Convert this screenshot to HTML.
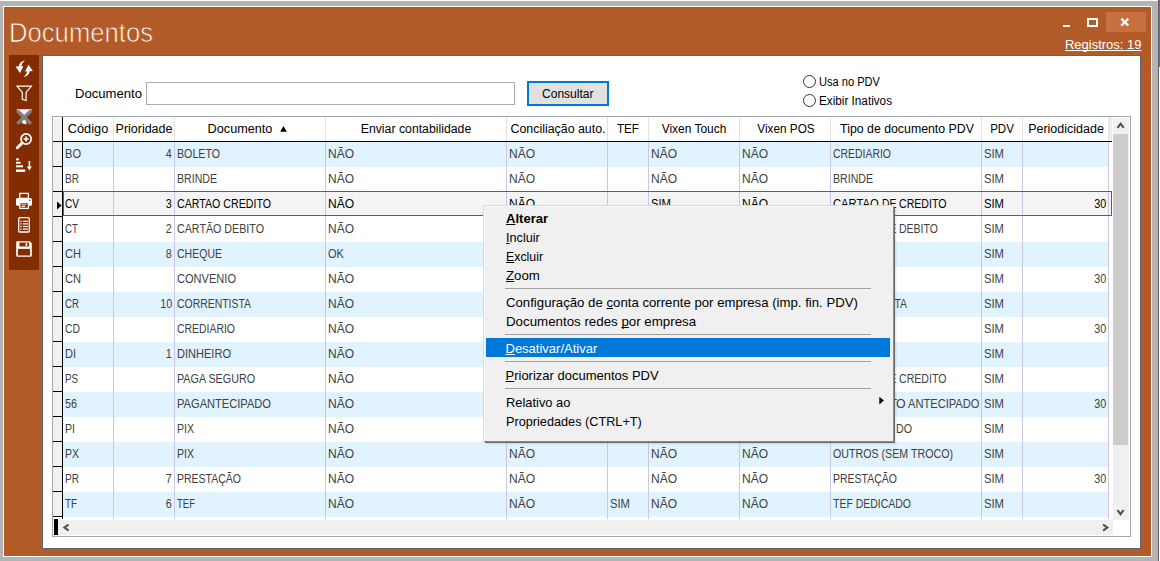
<!DOCTYPE html><html><head><meta charset="utf-8"><title>Documentos</title><style>
html,body{margin:0;padding:0}
body{width:1160px;height:561px;overflow:hidden;position:relative;background:#fff;font-family:"Liberation Sans",sans-serif}
.t{display:block}
u{text-decoration:underline;text-underline-offset:1px;text-decoration-thickness:1px;text-decoration-skip-ink:none}
</style></head><body>
<div style="position:absolute;left:0px;top:0px;width:1160px;height:561px;background:#fff;"></div>
<div style="position:absolute;left:0px;top:1px;width:1158px;height:560px;background:#b4b4b4;"></div>
<div style="position:absolute;left:3px;top:6px;width:1149px;height:551px;background:#fff;"></div>
<div style="position:absolute;left:4px;top:7px;width:1147px;height:549px;background:#b35b28;"></div>
<div style="position:absolute;left:1158px;top:0px;width:1px;height:561px;background:#5c6268;"></div>
<div style="position:absolute;left:1159px;top:0px;width:1px;height:67px;background:#b35b28;"></div>
<div style="position:absolute;left:1159px;top:67px;width:1px;height:494px;background:#fff;"></div>
<span class="t" style="position:absolute;top:16.00px;line-height:33px;font-size:27.5px;color:#fff;font-weight:normal;white-space:nowrap;-webkit-text-stroke:0.75px #b35b28;left:8.6px;transform-origin:0 50%;transform:scaleX(0.9327);">Documentos</span>
<div style="position:absolute;left:1106px;top:12px;width:40px;height:20px;background:#c87040;"></div>
<div style="position:absolute;left:1063px;top:25px;width:7px;height:2px;background:#fff;"></div>
<div style="position:absolute;left:1087px;top:18px;width:7px;height:5px;border:2px solid #fff;border-top-width:2px"></div>
<svg style="position:absolute;left:1119px;top:16px" width="12" height="12" viewBox="0 0 12 12"><path d="M2.3 2.6 L9.3 9.6 M9.3 2.6 L2.3 9.6" stroke="#fff" stroke-width="2.2" fill="none"/></svg>
<span class="t" style="position:absolute;top:36.00px;line-height:17px;font-size:13px;color:#fff;font-weight:normal;white-space:nowrap;text-decoration:underline;text-underline-offset:1px;text-decoration-skip-ink:none;text-decoration-thickness:1px;right:18.5px;transform-origin:100% 50%;">Registros: 19</span>
<div style="position:absolute;left:9px;top:55px;width:30px;height:215px;background:#822c00;"></div>
<!--ICONS-->
<svg style="position:absolute;left:9px;top:55px" width="30" height="215" viewBox="9 55 30 215">
<g fill="#fff" stroke="none">
<g id="ra"><path d="M15.6 66.6 L23.4 66.2 L19.9 72.9 Z"/><path d="M18.9 67.2 C18.6 63.8 21.2 61.2 25 60.6 C22.8 62.4 21.3 64.4 21.4 67.2 Z"/></g>
<g transform="rotate(180 24.2 68.8)"><path d="M15.6 66.6 L23.4 66.2 L19.9 72.9 Z"/><path d="M18.9 67.2 C18.6 63.8 21.2 61.2 25 60.6 C22.8 62.4 21.3 64.4 21.4 67.2 Z"/></g>
</g>
<path d="M17 86.2 L31.4 86.2 L26.1 92.4 L26.1 100.5 L22.3 99.3 L22.3 92.4 Z" fill="none" stroke="#fff" stroke-width="1.2" stroke-linejoin="miter"/>
<path d="M16.3 109.3 L32.1 109.3 L26.3 116 L26.3 124.6 L22.1 123.2 L22.1 116 Z" fill="#fff"/>
<path d="M17.3 110.8 L31 123.8 M31 110.8 L17.3 123.8" stroke="#808080" stroke-width="3.4" fill="none"/>
<circle cx="26.1" cy="139" r="5.1" fill="none" stroke="#fff" stroke-width="1.7"/>
<path d="M22 143.1 L17.3 147.7" stroke="#fff" stroke-width="2.9" stroke-linecap="round"/>
<path d="M23.5 139 L28.7 139 M26.1 136.4 L26.1 141.6" stroke="#fff" stroke-width="1.7"/>
<g fill="#fff"><rect x="16" y="158.4" width="3" height="1.9"/><rect x="16" y="161.8" width="4.7" height="1.9"/><rect x="16" y="165.3" width="7" height="2"/><rect x="16" y="169.5" width="9.2" height="2.4"/>
<rect x="28.6" y="161" width="1.6" height="6.5"/><path d="M26.9 166.6 L31.9 166.6 L29.4 170.4 Z"/></g>
<rect x="19.8" y="193.4" width="8.6" height="5" fill="none" stroke="#fff" stroke-width="1.3"/>
<rect x="16" y="198" width="16" height="7.8" rx="1.6" fill="#fff"/>
<rect x="19.8" y="202.6" width="8.6" height="5.8" fill="#822c00" stroke="#fff" stroke-width="1.3"/>
<rect x="21.5" y="204.4" width="4.5" height="0.9" fill="#fff"/><rect x="21.5" y="206" width="3.5" height="0.9" fill="#fff"/>
<rect x="29.2" y="199.6" width="1.3" height="1.3" fill="#822c00"/>
<rect x="18.7" y="217.7" width="10.6" height="14.3" rx="1.2" fill="none" stroke="#fff" stroke-width="1.3"/>
<g fill="#fff"><rect x="22.9" y="220.7" width="5" height="1.2"/><rect x="22.9" y="223.3" width="5" height="1.2"/><rect x="22.9" y="225.9" width="5" height="1.2"/><rect x="22.9" y="228.5" width="5" height="1.2"/>
<rect x="20.3" y="220.7" width="1.5" height="1.2"/><rect x="20.3" y="223.3" width="1.5" height="1.2"/><rect x="20.3" y="225.9" width="1.5" height="1.2"/><rect x="20.3" y="228.5" width="1.5" height="1.2"/></g>
<path d="M17.6 241.2 L29.6 241.2 L31.8 243.2 L31.8 255.4 Q31.8 256.8 30.4 256.8 L17.6 256.8 Q16.2 256.8 16.2 255.4 L16.2 242.6 Q16.2 241.2 17.6 241.2 Z" fill="#fff"/>
<rect x="19.4" y="242.5" width="9.6" height="4" fill="#822c00"/><rect x="25.6" y="243" width="1.6" height="3" fill="#fff"/>
<rect x="17.9" y="248.9" width="12.2" height="6.6" fill="#822c00"/>
</svg>

<div style="position:absolute;left:42px;top:55px;width:1099px;height:494px;background:#5d646b;"></div>
<div style="position:absolute;left:43px;top:56px;width:1097px;height:492px;background:#fff;"></div>
<span class="t" style="position:absolute;top:85.00px;line-height:17px;font-size:13px;color:#000;font-weight:normal;white-space:nowrap;left:74.6px;transform-origin:0 50%;transform:scaleX(1.0078);">Documento</span>
<div style="position:absolute;left:146px;top:82px;width:367px;height:21px;border:1px solid #abadb3;background:#fff"></div>
<div style="position:absolute;left:527px;top:81px;width:78px;height:21px;border:2px solid #0078d7;background:#e1e1e1"></div>
<span class="t" style="position:absolute;top:86.00px;line-height:16px;font-size:12px;color:#000;font-weight:normal;white-space:nowrap;left:267.79999999999995px;width:600px;text-align:center;transform-origin:50% 50%;">Consultar</span>
<div style="position:absolute;left:803px;top:75px;width:11px;height:11px;border:1px solid #333;border-radius:50%;background:#fff"></div>
<div style="position:absolute;left:803px;top:94px;width:11px;height:11px;border:1px solid #333;border-radius:50%;background:#fff"></div>
<span class="t" style="position:absolute;top:74.00px;line-height:16px;font-size:12px;color:#000;font-weight:normal;white-space:nowrap;left:818.6px;transform-origin:0 50%;transform:scaleX(0.9238);">Usa no PDV</span>
<span class="t" style="position:absolute;top:93.00px;line-height:16px;font-size:12px;color:#000;font-weight:normal;white-space:nowrap;left:818.6px;transform-origin:0 50%;transform:scaleX(0.9772);">Exibir Inativos</span>
<div style="position:absolute;left:52px;top:116px;width:1079px;height:421px;background:#a3a8b0;"></div>
<div style="position:absolute;left:53px;top:117px;width:1077px;height:419px;background:#fff;"></div>
<div style="position:absolute;left:53px;top:117px;width:9px;height:400px;background:#f0f0f0;"></div>
<div style="position:absolute;left:62px;top:117px;width:1px;height:402px;background:#000;"></div>
<div style="position:absolute;left:53px;top:117px;width:9px;height:1px;background:#fff;"></div>
<div style="position:absolute;left:53px;top:117px;width:1px;height:24px;background:#fff;"></div>
<div style="position:absolute;left:53px;top:140px;width:9px;height:1px;background:#f8f8f8;"></div>
<div style="position:absolute;left:113px;top:117px;width:1px;height:24px;background:#e2e2e2;"></div>
<div style="position:absolute;left:174px;top:117px;width:1px;height:24px;background:#e2e2e2;"></div>
<div style="position:absolute;left:325px;top:117px;width:1px;height:24px;background:#e2e2e2;"></div>
<div style="position:absolute;left:506px;top:117px;width:1px;height:24px;background:#e2e2e2;"></div>
<div style="position:absolute;left:607px;top:117px;width:1px;height:24px;background:#e2e2e2;"></div>
<div style="position:absolute;left:648px;top:117px;width:1px;height:24px;background:#e2e2e2;"></div>
<div style="position:absolute;left:739px;top:117px;width:1px;height:24px;background:#e2e2e2;"></div>
<div style="position:absolute;left:830px;top:117px;width:1px;height:24px;background:#e2e2e2;"></div>
<div style="position:absolute;left:981px;top:117px;width:1px;height:24px;background:#e2e2e2;"></div>
<div style="position:absolute;left:1022px;top:117px;width:1px;height:24px;background:#e2e2e2;"></div>
<div style="position:absolute;left:1108px;top:117px;width:1px;height:24px;background:#e2e2e2;"></div>
<div style="position:absolute;left:1109px;top:117px;width:3px;height:24px;background:#ececec;"></div>
<div style="position:absolute;left:53px;top:141px;width:1059px;height:1px;background:#000;"></div>
<span class="t" style="position:absolute;top:121.00px;line-height:16px;font-size:12px;color:#000;font-weight:normal;white-space:nowrap;left:-212.25px;width:600px;text-align:center;transform-origin:50% 50%;transform:scaleX(1.0649);">Código</span>
<span class="t" style="position:absolute;top:121.00px;line-height:16px;font-size:12px;color:#000;font-weight:normal;white-space:nowrap;left:-156.3px;width:600px;text-align:center;transform-origin:50% 50%;transform:scaleX(1.0383);">Prioridade</span>
<span class="t" style="position:absolute;top:121.00px;line-height:16px;font-size:12px;color:#000;font-weight:normal;white-space:nowrap;left:-59.900000000000006px;width:600px;text-align:center;transform-origin:50% 50%;transform:scaleX(1.0558);">Documento</span>
<span class="t" style="position:absolute;top:121.00px;line-height:16px;font-size:12px;color:#000;font-weight:normal;white-space:nowrap;left:116.10000000000002px;width:600px;text-align:center;transform-origin:50% 50%;transform:scaleX(1.0233);">Enviar contabilidade</span>
<span class="t" style="position:absolute;top:121.00px;line-height:16px;font-size:12px;color:#000;font-weight:normal;white-space:nowrap;left:257.54999999999995px;width:600px;text-align:center;transform-origin:50% 50%;transform:scaleX(1.0330);">Conciliação auto.</span>
<span class="t" style="position:absolute;top:121.00px;line-height:16px;font-size:12px;color:#000;font-weight:normal;white-space:nowrap;left:328.25px;width:600px;text-align:center;transform-origin:50% 50%;transform:scaleX(0.9660);">TEF</span>
<span class="t" style="position:absolute;top:121.00px;line-height:16px;font-size:12px;color:#000;font-weight:normal;white-space:nowrap;left:394.0999999999999px;width:600px;text-align:center;transform-origin:50% 50%;transform:scaleX(0.9946);">Vixen Touch</span>
<span class="t" style="position:absolute;top:121.00px;line-height:16px;font-size:12px;color:#000;font-weight:normal;white-space:nowrap;left:485.6500000000001px;width:600px;text-align:center;transform-origin:50% 50%;transform:scaleX(0.9797);">Vixen POS</span>
<span class="t" style="position:absolute;top:121.00px;line-height:16px;font-size:12px;color:#000;font-weight:normal;white-space:nowrap;left:606.5px;width:600px;text-align:center;transform-origin:50% 50%;transform:scaleX(1.0269);">Tipo de documento PDV</span>
<span class="t" style="position:absolute;top:121.00px;line-height:16px;font-size:12px;color:#000;font-weight:normal;white-space:nowrap;left:702.15px;width:600px;text-align:center;transform-origin:50% 50%;transform:scaleX(0.9600);">PDV</span>
<span class="t" style="position:absolute;top:121.00px;line-height:16px;font-size:12px;color:#000;font-weight:normal;white-space:nowrap;left:765.6500000000001px;width:600px;text-align:center;transform-origin:50% 50%;transform:scaleX(1.0410);">Periodicidade</span>
<svg style="position:absolute;left:279.5px;top:125px" width="8" height="8" viewBox="0 0 8 8"><path d="M0.2 6.8 L3.5 1 L6.8 6.8 Z" fill="#000"/></svg>
<div style="position:absolute;left:63px;top:191px;width:1049px;height:25px;background:#f4f4f4;"></div>
<div style="position:absolute;left:63px;top:142px;width:1046px;height:25px;background:#e0f3fe;"></div>
<div style="position:absolute;left:53px;top:166px;width:9px;height:1px;background:#000;"></div>
<span class="t" style="position:absolute;top:146.00px;line-height:16px;font-size:12px;color:#404040;font-weight:normal;white-space:nowrap;left:65px;transform-origin:0 50%;transform:scaleX(0.9225);">BO</span>
<span class="t" style="position:absolute;top:146.00px;line-height:16px;font-size:12px;color:#404040;font-weight:normal;white-space:nowrap;right:988px;transform-origin:100% 50%;transform:scaleX(0.8972);">4</span>
<span class="t" style="position:absolute;top:146.00px;line-height:16px;font-size:12px;color:#404040;font-weight:normal;white-space:nowrap;left:177px;transform-origin:0 50%;transform:scaleX(0.8872);">BOLETO</span>
<span class="t" style="position:absolute;top:146.00px;line-height:16px;font-size:12px;color:#404040;font-weight:normal;white-space:nowrap;left:328px;transform-origin:0 50%;">NÃO</span>
<span class="t" style="position:absolute;top:146.00px;line-height:16px;font-size:12px;color:#404040;font-weight:normal;white-space:nowrap;left:509px;transform-origin:0 50%;">NÃO</span>
<span class="t" style="position:absolute;top:146.00px;line-height:16px;font-size:12px;color:#404040;font-weight:normal;white-space:nowrap;left:651px;transform-origin:0 50%;">NÃO</span>
<span class="t" style="position:absolute;top:146.00px;line-height:16px;font-size:12px;color:#404040;font-weight:normal;white-space:nowrap;left:742px;transform-origin:0 50%;">NÃO</span>
<span class="t" style="position:absolute;top:146.00px;line-height:16px;font-size:12px;color:#404040;font-weight:normal;white-space:nowrap;left:833px;transform-origin:0 50%;transform:scaleX(0.8697);">CREDIARIO</span>
<span class="t" style="position:absolute;top:146.00px;line-height:16px;font-size:12px;color:#404040;font-weight:normal;white-space:nowrap;left:984px;transform-origin:0 50%;transform:scaleX(0.9370);">SIM</span>
<div style="position:absolute;left:53px;top:191px;width:9px;height:1px;background:#000;"></div>
<span class="t" style="position:absolute;top:171.00px;line-height:16px;font-size:12px;color:#404040;font-weight:normal;white-space:nowrap;left:65px;transform-origin:0 50%;transform:scaleX(0.8397);">BR</span>
<span class="t" style="position:absolute;top:171.00px;line-height:16px;font-size:12px;color:#404040;font-weight:normal;white-space:nowrap;left:177px;transform-origin:0 50%;transform:scaleX(0.8822);">BRINDE</span>
<span class="t" style="position:absolute;top:171.00px;line-height:16px;font-size:12px;color:#404040;font-weight:normal;white-space:nowrap;left:328px;transform-origin:0 50%;">NÃO</span>
<span class="t" style="position:absolute;top:171.00px;line-height:16px;font-size:12px;color:#404040;font-weight:normal;white-space:nowrap;left:509px;transform-origin:0 50%;">NÃO</span>
<span class="t" style="position:absolute;top:171.00px;line-height:16px;font-size:12px;color:#404040;font-weight:normal;white-space:nowrap;left:651px;transform-origin:0 50%;">NÃO</span>
<span class="t" style="position:absolute;top:171.00px;line-height:16px;font-size:12px;color:#404040;font-weight:normal;white-space:nowrap;left:742px;transform-origin:0 50%;">NÃO</span>
<span class="t" style="position:absolute;top:171.00px;line-height:16px;font-size:12px;color:#404040;font-weight:normal;white-space:nowrap;left:833px;transform-origin:0 50%;transform:scaleX(0.8822);">BRINDE</span>
<span class="t" style="position:absolute;top:171.00px;line-height:16px;font-size:12px;color:#404040;font-weight:normal;white-space:nowrap;left:984px;transform-origin:0 50%;transform:scaleX(0.9370);">SIM</span>
<div style="position:absolute;left:53px;top:216px;width:9px;height:1px;background:#000;"></div>
<span class="t" style="position:absolute;top:196.00px;line-height:16px;font-size:12px;color:#000;font-weight:normal;white-space:nowrap;left:65px;transform-origin:0 50%;transform:scaleX(0.8397);">CV</span>
<span class="t" style="position:absolute;top:196.00px;line-height:16px;font-size:12px;color:#000;font-weight:normal;white-space:nowrap;right:988px;transform-origin:100% 50%;transform:scaleX(0.8972);">3</span>
<span class="t" style="position:absolute;top:196.00px;line-height:16px;font-size:12px;color:#000;font-weight:normal;white-space:nowrap;left:177px;transform-origin:0 50%;transform:scaleX(0.8867);">CARTAO CREDITO</span>
<span class="t" style="position:absolute;top:196.00px;line-height:16px;font-size:12px;color:#000;font-weight:normal;white-space:nowrap;left:328px;transform-origin:0 50%;">NÃO</span>
<span class="t" style="position:absolute;top:196.00px;line-height:16px;font-size:12px;color:#000;font-weight:normal;white-space:nowrap;left:509px;transform-origin:0 50%;">NÃO</span>
<span class="t" style="position:absolute;top:196.00px;line-height:16px;font-size:12px;color:#000;font-weight:normal;white-space:nowrap;left:651px;transform-origin:0 50%;transform:scaleX(0.9370);">SIM</span>
<span class="t" style="position:absolute;top:196.00px;line-height:16px;font-size:12px;color:#000;font-weight:normal;white-space:nowrap;left:742px;transform-origin:0 50%;">NÃO</span>
<span class="t" style="position:absolute;top:196.00px;line-height:16px;font-size:12px;color:#000;font-weight:normal;white-space:nowrap;left:832.9px;transform-origin:0 50%;transform:scaleX(0.9344);">CARTAO</span>
<span class="t" style="position:absolute;top:196.00px;line-height:16px;font-size:12px;color:#000;font-weight:normal;white-space:nowrap;left:882.1999999999999px;transform-origin:0 50%;transform:scaleX(0.8577);">DE</span>
<span class="t" style="position:absolute;top:196.00px;line-height:16px;font-size:12px;color:#000;font-weight:normal;white-space:nowrap;left:898.8px;transform-origin:0 50%;transform:scaleX(0.8811);">CREDITO</span>
<span class="t" style="position:absolute;top:196.00px;line-height:16px;font-size:12px;color:#000;font-weight:normal;white-space:nowrap;left:984px;transform-origin:0 50%;transform:scaleX(0.9370);">SIM</span>
<span class="t" style="position:absolute;top:196.00px;line-height:16px;font-size:12px;color:#000;font-weight:normal;white-space:nowrap;right:54px;transform-origin:100% 50%;transform:scaleX(0.8982);">30</span>
<div style="position:absolute;left:53px;top:241px;width:9px;height:1px;background:#000;"></div>
<span class="t" style="position:absolute;top:221.00px;line-height:16px;font-size:12px;color:#404040;font-weight:normal;white-space:nowrap;left:65px;transform-origin:0 50%;transform:scaleX(0.8125);">CT</span>
<span class="t" style="position:absolute;top:221.00px;line-height:16px;font-size:12px;color:#404040;font-weight:normal;white-space:nowrap;right:988px;transform-origin:100% 50%;transform:scaleX(0.8972);">2</span>
<span class="t" style="position:absolute;top:221.00px;line-height:16px;font-size:12px;color:#404040;font-weight:normal;white-space:nowrap;left:177px;transform-origin:0 50%;transform:scaleX(0.8916);">CARTÃO DEBITO</span>
<span class="t" style="position:absolute;top:221.00px;line-height:16px;font-size:12px;color:#404040;font-weight:normal;white-space:nowrap;left:328px;transform-origin:0 50%;">NÃO</span>
<span class="t" style="position:absolute;top:221.00px;line-height:16px;font-size:12px;color:#404040;font-weight:normal;white-space:nowrap;left:509px;transform-origin:0 50%;">NÃO</span>
<span class="t" style="position:absolute;top:221.00px;line-height:16px;font-size:12px;color:#404040;font-weight:normal;white-space:nowrap;left:651px;transform-origin:0 50%;">NÃO</span>
<span class="t" style="position:absolute;top:221.00px;line-height:16px;font-size:12px;color:#404040;font-weight:normal;white-space:nowrap;left:742px;transform-origin:0 50%;">NÃO</span>
<span class="t" style="position:absolute;top:221.00px;line-height:16px;font-size:12px;color:#404040;font-weight:normal;white-space:nowrap;left:882.1999999999999px;transform-origin:0 50%;transform:scaleX(0.8577);">DE</span>
<span class="t" style="position:absolute;top:221.00px;line-height:16px;font-size:12px;color:#404040;font-weight:normal;white-space:nowrap;left:899.0px;transform-origin:0 50%;transform:scaleX(0.8748);">DEBITO</span>
<span class="t" style="position:absolute;top:221.00px;line-height:16px;font-size:12px;color:#404040;font-weight:normal;white-space:nowrap;left:984px;transform-origin:0 50%;transform:scaleX(0.9370);">SIM</span>
<div style="position:absolute;left:63px;top:242px;width:1046px;height:25px;background:#e0f3fe;"></div>
<div style="position:absolute;left:53px;top:266px;width:9px;height:1px;background:#000;"></div>
<span class="t" style="position:absolute;top:246.00px;line-height:16px;font-size:12px;color:#404040;font-weight:normal;white-space:nowrap;left:65px;transform-origin:0 50%;transform:scaleX(0.9225);">CH</span>
<span class="t" style="position:absolute;top:246.00px;line-height:16px;font-size:12px;color:#404040;font-weight:normal;white-space:nowrap;right:988px;transform-origin:100% 50%;transform:scaleX(0.8972);">8</span>
<span class="t" style="position:absolute;top:246.00px;line-height:16px;font-size:12px;color:#404040;font-weight:normal;white-space:nowrap;left:177px;transform-origin:0 50%;transform:scaleX(0.8764);">CHEQUE</span>
<span class="t" style="position:absolute;top:246.00px;line-height:16px;font-size:12px;color:#404040;font-weight:normal;white-space:nowrap;left:328px;transform-origin:0 50%;transform:scaleX(0.9225);">OK</span>
<span class="t" style="position:absolute;top:246.00px;line-height:16px;font-size:12px;color:#404040;font-weight:normal;white-space:nowrap;left:509px;transform-origin:0 50%;">NÃO</span>
<span class="t" style="position:absolute;top:246.00px;line-height:16px;font-size:12px;color:#404040;font-weight:normal;white-space:nowrap;left:651px;transform-origin:0 50%;">NÃO</span>
<span class="t" style="position:absolute;top:246.00px;line-height:16px;font-size:12px;color:#404040;font-weight:normal;white-space:nowrap;left:742px;transform-origin:0 50%;">NÃO</span>
<span class="t" style="position:absolute;top:246.00px;line-height:16px;font-size:12px;color:#404040;font-weight:normal;white-space:nowrap;left:833px;transform-origin:0 50%;transform:scaleX(0.8764);">CHEQUE</span>
<span class="t" style="position:absolute;top:246.00px;line-height:16px;font-size:12px;color:#404040;font-weight:normal;white-space:nowrap;left:984px;transform-origin:0 50%;transform:scaleX(0.9370);">SIM</span>
<div style="position:absolute;left:53px;top:291px;width:9px;height:1px;background:#000;"></div>
<span class="t" style="position:absolute;top:271.00px;line-height:16px;font-size:12px;color:#404040;font-weight:normal;white-space:nowrap;left:65px;transform-origin:0 50%;transform:scaleX(0.9225);">CN</span>
<span class="t" style="position:absolute;top:271.00px;line-height:16px;font-size:12px;color:#404040;font-weight:normal;white-space:nowrap;left:177px;transform-origin:0 50%;transform:scaleX(0.9216);">CONVENIO</span>
<span class="t" style="position:absolute;top:271.00px;line-height:16px;font-size:12px;color:#404040;font-weight:normal;white-space:nowrap;left:328px;transform-origin:0 50%;">NÃO</span>
<span class="t" style="position:absolute;top:271.00px;line-height:16px;font-size:12px;color:#404040;font-weight:normal;white-space:nowrap;left:509px;transform-origin:0 50%;">NÃO</span>
<span class="t" style="position:absolute;top:271.00px;line-height:16px;font-size:12px;color:#404040;font-weight:normal;white-space:nowrap;left:651px;transform-origin:0 50%;">NÃO</span>
<span class="t" style="position:absolute;top:271.00px;line-height:16px;font-size:12px;color:#404040;font-weight:normal;white-space:nowrap;left:742px;transform-origin:0 50%;">NÃO</span>
<span class="t" style="position:absolute;top:271.00px;line-height:16px;font-size:12px;color:#404040;font-weight:normal;white-space:nowrap;left:833px;transform-origin:0 50%;transform:scaleX(0.9216);">CONVENIO</span>
<span class="t" style="position:absolute;top:271.00px;line-height:16px;font-size:12px;color:#404040;font-weight:normal;white-space:nowrap;left:984px;transform-origin:0 50%;transform:scaleX(0.9370);">SIM</span>
<span class="t" style="position:absolute;top:271.00px;line-height:16px;font-size:12px;color:#404040;font-weight:normal;white-space:nowrap;right:54px;transform-origin:100% 50%;transform:scaleX(0.8982);">30</span>
<div style="position:absolute;left:63px;top:292px;width:1046px;height:25px;background:#e0f3fe;"></div>
<div style="position:absolute;left:53px;top:316px;width:9px;height:1px;background:#000;"></div>
<span class="t" style="position:absolute;top:296.00px;line-height:16px;font-size:12px;color:#404040;font-weight:normal;white-space:nowrap;left:65px;transform-origin:0 50%;transform:scaleX(0.8072);">CR</span>
<span class="t" style="position:absolute;top:296.00px;line-height:16px;font-size:12px;color:#404040;font-weight:normal;white-space:nowrap;right:988px;transform-origin:100% 50%;transform:scaleX(0.8982);">10</span>
<span class="t" style="position:absolute;top:296.00px;line-height:16px;font-size:12px;color:#404040;font-weight:normal;white-space:nowrap;left:177px;transform-origin:0 50%;transform:scaleX(0.8693);">CORRENTISTA</span>
<span class="t" style="position:absolute;top:296.00px;line-height:16px;font-size:12px;color:#404040;font-weight:normal;white-space:nowrap;left:328px;transform-origin:0 50%;">NÃO</span>
<span class="t" style="position:absolute;top:296.00px;line-height:16px;font-size:12px;color:#404040;font-weight:normal;white-space:nowrap;left:509px;transform-origin:0 50%;">NÃO</span>
<span class="t" style="position:absolute;top:296.00px;line-height:16px;font-size:12px;color:#404040;font-weight:normal;white-space:nowrap;left:651px;transform-origin:0 50%;">NÃO</span>
<span class="t" style="position:absolute;top:296.00px;line-height:16px;font-size:12px;color:#404040;font-weight:normal;white-space:nowrap;left:742px;transform-origin:0 50%;">NÃO</span>
<span class="t" style="position:absolute;top:296.00px;line-height:16px;font-size:12px;color:#404040;font-weight:normal;white-space:nowrap;left:833px;transform-origin:0 50%;transform:scaleX(0.8693);">CORRENTISTA</span>
<span class="t" style="position:absolute;top:296.00px;line-height:16px;font-size:12px;color:#404040;font-weight:normal;white-space:nowrap;left:984px;transform-origin:0 50%;transform:scaleX(0.9370);">SIM</span>
<div style="position:absolute;left:53px;top:341px;width:9px;height:1px;background:#000;"></div>
<span class="t" style="position:absolute;top:321.00px;line-height:16px;font-size:12px;color:#404040;font-weight:normal;white-space:nowrap;left:65px;transform-origin:0 50%;transform:scaleX(0.8649);">CD</span>
<span class="t" style="position:absolute;top:321.00px;line-height:16px;font-size:12px;color:#404040;font-weight:normal;white-space:nowrap;left:177px;transform-origin:0 50%;transform:scaleX(0.8697);">CREDIARIO</span>
<span class="t" style="position:absolute;top:321.00px;line-height:16px;font-size:12px;color:#404040;font-weight:normal;white-space:nowrap;left:328px;transform-origin:0 50%;">NÃO</span>
<span class="t" style="position:absolute;top:321.00px;line-height:16px;font-size:12px;color:#404040;font-weight:normal;white-space:nowrap;left:509px;transform-origin:0 50%;">NÃO</span>
<span class="t" style="position:absolute;top:321.00px;line-height:16px;font-size:12px;color:#404040;font-weight:normal;white-space:nowrap;left:651px;transform-origin:0 50%;">NÃO</span>
<span class="t" style="position:absolute;top:321.00px;line-height:16px;font-size:12px;color:#404040;font-weight:normal;white-space:nowrap;left:742px;transform-origin:0 50%;">NÃO</span>
<span class="t" style="position:absolute;top:321.00px;line-height:16px;font-size:12px;color:#404040;font-weight:normal;white-space:nowrap;left:833px;transform-origin:0 50%;transform:scaleX(0.8697);">CREDIARIO</span>
<span class="t" style="position:absolute;top:321.00px;line-height:16px;font-size:12px;color:#404040;font-weight:normal;white-space:nowrap;left:984px;transform-origin:0 50%;transform:scaleX(0.9370);">SIM</span>
<span class="t" style="position:absolute;top:321.00px;line-height:16px;font-size:12px;color:#404040;font-weight:normal;white-space:nowrap;right:54px;transform-origin:100% 50%;transform:scaleX(0.8982);">30</span>
<div style="position:absolute;left:63px;top:342px;width:1046px;height:25px;background:#e0f3fe;"></div>
<div style="position:absolute;left:53px;top:366px;width:9px;height:1px;background:#000;"></div>
<span class="t" style="position:absolute;top:346.00px;line-height:16px;font-size:12px;color:#404040;font-weight:normal;white-space:nowrap;left:65px;transform-origin:0 50%;transform:scaleX(0.9167);">DI</span>
<span class="t" style="position:absolute;top:346.00px;line-height:16px;font-size:12px;color:#404040;font-weight:normal;white-space:nowrap;right:988px;transform-origin:100% 50%;transform:scaleX(0.8972);">1</span>
<span class="t" style="position:absolute;top:346.00px;line-height:16px;font-size:12px;color:#404040;font-weight:normal;white-space:nowrap;left:177px;transform-origin:0 50%;transform:scaleX(0.9204);">DINHEIRO</span>
<span class="t" style="position:absolute;top:346.00px;line-height:16px;font-size:12px;color:#404040;font-weight:normal;white-space:nowrap;left:328px;transform-origin:0 50%;">NÃO</span>
<span class="t" style="position:absolute;top:346.00px;line-height:16px;font-size:12px;color:#404040;font-weight:normal;white-space:nowrap;left:509px;transform-origin:0 50%;">NÃO</span>
<span class="t" style="position:absolute;top:346.00px;line-height:16px;font-size:12px;color:#404040;font-weight:normal;white-space:nowrap;left:651px;transform-origin:0 50%;">NÃO</span>
<span class="t" style="position:absolute;top:346.00px;line-height:16px;font-size:12px;color:#404040;font-weight:normal;white-space:nowrap;left:742px;transform-origin:0 50%;">NÃO</span>
<span class="t" style="position:absolute;top:346.00px;line-height:16px;font-size:12px;color:#404040;font-weight:normal;white-space:nowrap;left:833px;transform-origin:0 50%;transform:scaleX(0.9204);">DINHEIRO</span>
<span class="t" style="position:absolute;top:346.00px;line-height:16px;font-size:12px;color:#404040;font-weight:normal;white-space:nowrap;left:984px;transform-origin:0 50%;transform:scaleX(0.9370);">SIM</span>
<div style="position:absolute;left:53px;top:391px;width:9px;height:1px;background:#000;"></div>
<span class="t" style="position:absolute;top:371.00px;line-height:16px;font-size:12px;color:#404040;font-weight:normal;white-space:nowrap;left:65px;transform-origin:0 50%;transform:scaleX(0.8117);">PS</span>
<span class="t" style="position:absolute;top:371.00px;line-height:16px;font-size:12px;color:#404040;font-weight:normal;white-space:nowrap;left:177px;transform-origin:0 50%;transform:scaleX(0.8951);">PAGA SEGURO</span>
<span class="t" style="position:absolute;top:371.00px;line-height:16px;font-size:12px;color:#404040;font-weight:normal;white-space:nowrap;left:328px;transform-origin:0 50%;">NÃO</span>
<span class="t" style="position:absolute;top:371.00px;line-height:16px;font-size:12px;color:#404040;font-weight:normal;white-space:nowrap;left:509px;transform-origin:0 50%;">NÃO</span>
<span class="t" style="position:absolute;top:371.00px;line-height:16px;font-size:12px;color:#404040;font-weight:normal;white-space:nowrap;left:651px;transform-origin:0 50%;">NÃO</span>
<span class="t" style="position:absolute;top:371.00px;line-height:16px;font-size:12px;color:#404040;font-weight:normal;white-space:nowrap;left:742px;transform-origin:0 50%;">NÃO</span>
<span class="t" style="position:absolute;top:371.00px;line-height:16px;font-size:12px;color:#404040;font-weight:normal;white-space:nowrap;left:882.1999999999999px;transform-origin:0 50%;transform:scaleX(0.8577);">DE</span>
<span class="t" style="position:absolute;top:371.00px;line-height:16px;font-size:12px;color:#404040;font-weight:normal;white-space:nowrap;left:898.8px;transform-origin:0 50%;transform:scaleX(0.8811);">CREDITO</span>
<span class="t" style="position:absolute;top:371.00px;line-height:16px;font-size:12px;color:#404040;font-weight:normal;white-space:nowrap;left:984px;transform-origin:0 50%;transform:scaleX(0.9370);">SIM</span>
<div style="position:absolute;left:63px;top:392px;width:1046px;height:25px;background:#e0f3fe;"></div>
<div style="position:absolute;left:53px;top:416px;width:9px;height:1px;background:#000;"></div>
<span class="t" style="position:absolute;top:396.00px;line-height:16px;font-size:12px;color:#404040;font-weight:normal;white-space:nowrap;left:65px;transform-origin:0 50%;transform:scaleX(0.8982);">56</span>
<span class="t" style="position:absolute;top:396.00px;line-height:16px;font-size:12px;color:#404040;font-weight:normal;white-space:nowrap;left:177px;transform-origin:0 50%;transform:scaleX(0.9254);">PAGANTECIPADO</span>
<span class="t" style="position:absolute;top:396.00px;line-height:16px;font-size:12px;color:#404040;font-weight:normal;white-space:nowrap;left:328px;transform-origin:0 50%;">NÃO</span>
<span class="t" style="position:absolute;top:396.00px;line-height:16px;font-size:12px;color:#404040;font-weight:normal;white-space:nowrap;left:509px;transform-origin:0 50%;">NÃO</span>
<span class="t" style="position:absolute;top:396.00px;line-height:16px;font-size:12px;color:#404040;font-weight:normal;white-space:nowrap;left:651px;transform-origin:0 50%;">NÃO</span>
<span class="t" style="position:absolute;top:396.00px;line-height:16px;font-size:12px;color:#404040;font-weight:normal;white-space:nowrap;left:742px;transform-origin:0 50%;">NÃO</span>
<span class="t" style="position:absolute;top:396.00px;line-height:16px;font-size:12px;color:#404040;font-weight:normal;white-space:nowrap;left:890.0999999999999px;transform-origin:0 50%;transform:scaleX(0.9532);">T</span>
<span class="t" style="position:absolute;top:396.00px;line-height:16px;font-size:12px;color:#404040;font-weight:normal;white-space:nowrap;left:896.0999999999999px;transform-origin:0 50%;transform:scaleX(1.0274);">O</span>
<span class="t" style="position:absolute;top:396.00px;line-height:16px;font-size:12px;color:#404040;font-weight:normal;white-space:nowrap;left:908.0999999999999px;transform-origin:0 50%;transform:scaleX(0.9258);">ANTECIPADO</span>
<span class="t" style="position:absolute;top:396.00px;line-height:16px;font-size:12px;color:#404040;font-weight:normal;white-space:nowrap;left:984px;transform-origin:0 50%;transform:scaleX(0.9370);">SIM</span>
<span class="t" style="position:absolute;top:396.00px;line-height:16px;font-size:12px;color:#404040;font-weight:normal;white-space:nowrap;right:54px;transform-origin:100% 50%;transform:scaleX(0.8982);">30</span>
<div style="position:absolute;left:53px;top:441px;width:9px;height:1px;background:#000;"></div>
<span class="t" style="position:absolute;top:421.00px;line-height:16px;font-size:12px;color:#404040;font-weight:normal;white-space:nowrap;left:65px;transform-origin:0 50%;transform:scaleX(0.8815);">PI</span>
<span class="t" style="position:absolute;top:421.00px;line-height:16px;font-size:12px;color:#404040;font-weight:normal;white-space:nowrap;left:177px;transform-origin:0 50%;transform:scaleX(0.8788);">PIX</span>
<span class="t" style="position:absolute;top:421.00px;line-height:16px;font-size:12px;color:#404040;font-weight:normal;white-space:nowrap;left:328px;transform-origin:0 50%;">NÃO</span>
<span class="t" style="position:absolute;top:421.00px;line-height:16px;font-size:12px;color:#404040;font-weight:normal;white-space:nowrap;left:509px;transform-origin:0 50%;">NÃO</span>
<span class="t" style="position:absolute;top:421.00px;line-height:16px;font-size:12px;color:#404040;font-weight:normal;white-space:nowrap;left:651px;transform-origin:0 50%;">NÃO</span>
<span class="t" style="position:absolute;top:421.00px;line-height:16px;font-size:12px;color:#404040;font-weight:normal;white-space:nowrap;left:742px;transform-origin:0 50%;">NÃO</span>
<span class="t" style="position:absolute;top:421.00px;line-height:16px;font-size:12px;color:#404040;font-weight:normal;white-space:nowrap;left:895.6999999999999px;transform-origin:0 50%;transform:scaleX(0.8889);">DO</span>
<span class="t" style="position:absolute;top:421.00px;line-height:16px;font-size:12px;color:#404040;font-weight:normal;white-space:nowrap;left:984px;transform-origin:0 50%;transform:scaleX(0.9370);">SIM</span>
<div style="position:absolute;left:63px;top:442px;width:1046px;height:25px;background:#e0f3fe;"></div>
<div style="position:absolute;left:53px;top:466px;width:9px;height:1px;background:#000;"></div>
<span class="t" style="position:absolute;top:446.00px;line-height:16px;font-size:12px;color:#404040;font-weight:normal;white-space:nowrap;left:65px;transform-origin:0 50%;transform:scaleX(0.8741);">PX</span>
<span class="t" style="position:absolute;top:446.00px;line-height:16px;font-size:12px;color:#404040;font-weight:normal;white-space:nowrap;left:177px;transform-origin:0 50%;transform:scaleX(0.8788);">PIX</span>
<span class="t" style="position:absolute;top:446.00px;line-height:16px;font-size:12px;color:#404040;font-weight:normal;white-space:nowrap;left:328px;transform-origin:0 50%;">NÃO</span>
<span class="t" style="position:absolute;top:446.00px;line-height:16px;font-size:12px;color:#404040;font-weight:normal;white-space:nowrap;left:509px;transform-origin:0 50%;">NÃO</span>
<span class="t" style="position:absolute;top:446.00px;line-height:16px;font-size:12px;color:#404040;font-weight:normal;white-space:nowrap;left:651px;transform-origin:0 50%;">NÃO</span>
<span class="t" style="position:absolute;top:446.00px;line-height:16px;font-size:12px;color:#404040;font-weight:normal;white-space:nowrap;left:742px;transform-origin:0 50%;">NÃO</span>
<span class="t" style="position:absolute;top:446.00px;line-height:16px;font-size:12px;color:#404040;font-weight:normal;white-space:nowrap;left:833px;transform-origin:0 50%;transform:scaleX(0.8881);">OUTROS (SEM TROCO)</span>
<span class="t" style="position:absolute;top:446.00px;line-height:16px;font-size:12px;color:#404040;font-weight:normal;white-space:nowrap;left:984px;transform-origin:0 50%;transform:scaleX(0.9370);">SIM</span>
<div style="position:absolute;left:53px;top:491px;width:9px;height:1px;background:#000;"></div>
<span class="t" style="position:absolute;top:471.00px;line-height:16px;font-size:12px;color:#404040;font-weight:normal;white-space:nowrap;left:65px;transform-origin:0 50%;transform:scaleX(0.8397);">PR</span>
<span class="t" style="position:absolute;top:471.00px;line-height:16px;font-size:12px;color:#404040;font-weight:normal;white-space:nowrap;right:988px;transform-origin:100% 50%;transform:scaleX(0.8972);">7</span>
<span class="t" style="position:absolute;top:471.00px;line-height:16px;font-size:12px;color:#404040;font-weight:normal;white-space:nowrap;left:177px;transform-origin:0 50%;transform:scaleX(0.8752);">PRESTAÇÃO</span>
<span class="t" style="position:absolute;top:471.00px;line-height:16px;font-size:12px;color:#404040;font-weight:normal;white-space:nowrap;left:328px;transform-origin:0 50%;">NÃO</span>
<span class="t" style="position:absolute;top:471.00px;line-height:16px;font-size:12px;color:#404040;font-weight:normal;white-space:nowrap;left:509px;transform-origin:0 50%;">NÃO</span>
<span class="t" style="position:absolute;top:471.00px;line-height:16px;font-size:12px;color:#404040;font-weight:normal;white-space:nowrap;left:651px;transform-origin:0 50%;">NÃO</span>
<span class="t" style="position:absolute;top:471.00px;line-height:16px;font-size:12px;color:#404040;font-weight:normal;white-space:nowrap;left:742px;transform-origin:0 50%;">NÃO</span>
<span class="t" style="position:absolute;top:471.00px;line-height:16px;font-size:12px;color:#404040;font-weight:normal;white-space:nowrap;left:833px;transform-origin:0 50%;transform:scaleX(0.8752);">PRESTAÇÃO</span>
<span class="t" style="position:absolute;top:471.00px;line-height:16px;font-size:12px;color:#404040;font-weight:normal;white-space:nowrap;left:984px;transform-origin:0 50%;transform:scaleX(0.9370);">SIM</span>
<span class="t" style="position:absolute;top:471.00px;line-height:16px;font-size:12px;color:#404040;font-weight:normal;white-space:nowrap;right:54px;transform-origin:100% 50%;transform:scaleX(0.8982);">30</span>
<div style="position:absolute;left:63px;top:492px;width:1046px;height:25px;background:#e0f3fe;"></div>
<div style="position:absolute;left:53px;top:516px;width:9px;height:1px;background:#000;"></div>
<span class="t" style="position:absolute;top:496.00px;line-height:16px;font-size:12px;color:#404040;font-weight:normal;white-space:nowrap;left:65px;transform-origin:0 50%;transform:scaleX(0.8179);">TF</span>
<span class="t" style="position:absolute;top:496.00px;line-height:16px;font-size:12px;color:#404040;font-weight:normal;white-space:nowrap;right:988px;transform-origin:100% 50%;transform:scaleX(0.8972);">6</span>
<span class="t" style="position:absolute;top:496.00px;line-height:16px;font-size:12px;color:#404040;font-weight:normal;white-space:nowrap;left:177px;transform-origin:0 50%;transform:scaleX(0.7939);">TEF</span>
<span class="t" style="position:absolute;top:496.00px;line-height:16px;font-size:12px;color:#404040;font-weight:normal;white-space:nowrap;left:328px;transform-origin:0 50%;">NÃO</span>
<span class="t" style="position:absolute;top:496.00px;line-height:16px;font-size:12px;color:#404040;font-weight:normal;white-space:nowrap;left:509px;transform-origin:0 50%;">NÃO</span>
<span class="t" style="position:absolute;top:496.00px;line-height:16px;font-size:12px;color:#404040;font-weight:normal;white-space:nowrap;left:610px;transform-origin:0 50%;transform:scaleX(0.9370);">SIM</span>
<span class="t" style="position:absolute;top:496.00px;line-height:16px;font-size:12px;color:#404040;font-weight:normal;white-space:nowrap;left:651px;transform-origin:0 50%;">NÃO</span>
<span class="t" style="position:absolute;top:496.00px;line-height:16px;font-size:12px;color:#404040;font-weight:normal;white-space:nowrap;left:742px;transform-origin:0 50%;">NÃO</span>
<span class="t" style="position:absolute;top:496.00px;line-height:16px;font-size:12px;color:#404040;font-weight:normal;white-space:nowrap;left:833px;transform-origin:0 50%;transform:scaleX(0.8730);">TEF DEDICADO</span>
<span class="t" style="position:absolute;top:496.00px;line-height:16px;font-size:12px;color:#404040;font-weight:normal;white-space:nowrap;left:984px;transform-origin:0 50%;transform:scaleX(0.9370);">SIM</span>
<div style="position:absolute;left:113px;top:142px;width:1px;height:377px;background:#cdc6e6;"></div>
<div style="position:absolute;left:174px;top:142px;width:1px;height:377px;background:#cdc6e6;"></div>
<div style="position:absolute;left:325px;top:142px;width:1px;height:377px;background:#cdc6e6;"></div>
<div style="position:absolute;left:506px;top:142px;width:1px;height:377px;background:#cdc6e6;"></div>
<div style="position:absolute;left:607px;top:142px;width:1px;height:377px;background:#cdc6e6;"></div>
<div style="position:absolute;left:648px;top:142px;width:1px;height:377px;background:#cdc6e6;"></div>
<div style="position:absolute;left:739px;top:142px;width:1px;height:377px;background:#cdc6e6;"></div>
<div style="position:absolute;left:830px;top:142px;width:1px;height:377px;background:#cdc6e6;"></div>
<div style="position:absolute;left:981px;top:142px;width:1px;height:377px;background:#cdc6e6;"></div>
<div style="position:absolute;left:1022px;top:142px;width:1px;height:377px;background:#cdc6e6;"></div>
<div style="position:absolute;left:1108px;top:142px;width:1px;height:377px;background:#cdc6e6;"></div>
<div style="position:absolute;left:63px;top:191px;width:1047px;height:23px;border:1px solid #0078d7"></div>
<svg style="position:absolute;left:57px;top:201px" width="5" height="9" viewBox="0 0 5 9"><path d="M0 0.5 L4.6 4.5 L0 8.5 Z" fill="#000"/></svg>
<div style="position:absolute;left:1113px;top:118px;width:16px;height:402px;background:#f0f0f0;"></div>
<div style="position:absolute;left:1113px;top:134px;width:15px;height:311px;background:#cdcdcd;"></div>
<svg style="position:absolute;left:1112px;top:117px" width="16" height="16" viewBox="0 0 16 16"><path d="M5.50 10.90 L8.60 6.70 L11.70 10.90" stroke="#505050" stroke-width="2.1" fill="none" stroke-linejoin="miter"/></svg>
<svg style="position:absolute;left:1112px;top:504px" width="16" height="16" viewBox="0 0 16 16"><path d="M5.40 6.00 L8.50 10.20 L11.60 6.00" stroke="#505050" stroke-width="2.1" fill="none" stroke-linejoin="miter"/></svg>
<div style="position:absolute;left:53px;top:520px;width:1060px;height:15px;background:#f0f0f0;"></div>
<div style="position:absolute;left:53px;top:519px;width:5px;height:17px;background:#fff;"></div>
<div style="position:absolute;left:54px;top:519px;width:4px;height:16px;background:#000;"></div>
<svg style="position:absolute;left:58px;top:519px" width="16" height="16" viewBox="0 0 16 16"><path d="M10.60 5.50 L6.40 8.60 L10.60 11.70" stroke="#505050" stroke-width="2.1" fill="none" stroke-linejoin="miter"/></svg>
<svg style="position:absolute;left:1097px;top:519px" width="16" height="16" viewBox="0 0 16 16"><path d="M6.10 5.50 L10.30 8.60 L6.10 11.70" stroke="#505050" stroke-width="2.1" fill="none" stroke-linejoin="miter"/></svg>
<div style="position:absolute;left:483px;top:205px;width:408px;height:234px;border:1px solid #dadada;border-right-color:#f0f0f0;border-bottom-color:#f0f0f0;background:#f0f0f0;box-shadow:inset 1px 1px 0 #f9f9f9,1px 1px 0 #8c8c8c,2px 2px 0 #6a6a6a,3px 3px 2px rgba(0,0,0,.12)"></div>
<div style="position:absolute;left:486px;top:338px;width:404px;height:19px;background:#0078d7;"></div>
<div style="position:absolute;left:505px;top:288px;width:366px;height:1px;background:#a0a0a0;"></div>
<div style="position:absolute;left:505px;top:334px;width:366px;height:1px;background:#a0a0a0;"></div>
<div style="position:absolute;left:505px;top:361px;width:366px;height:1px;background:#a0a0a0;"></div>
<div style="position:absolute;left:505px;top:388px;width:366px;height:1px;background:#a0a0a0;"></div>
<span class="t" style="position:absolute;top:210.00px;line-height:17px;font-size:13px;color:#000;font-weight:bold;white-space:nowrap;left:505.5px;transform-origin:0 50%;transform:scaleX(1.0066);"><u>A</u>lterar</span>
<span class="t" style="position:absolute;top:229.00px;line-height:17px;font-size:13px;color:#000;font-weight:normal;white-space:nowrap;left:505.5px;transform-origin:0 50%;transform:scaleX(0.9740);"><u>I</u>ncluir</span>
<span class="t" style="position:absolute;top:248.00px;line-height:17px;font-size:13px;color:#000;font-weight:normal;white-space:nowrap;left:505.5px;transform-origin:0 50%;transform:scaleX(0.9509);"><u>E</u>xcluir</span>
<span class="t" style="position:absolute;top:267.00px;line-height:17px;font-size:13px;color:#000;font-weight:normal;white-space:nowrap;left:505.5px;transform-origin:0 50%;transform:scaleX(1.0165);"><u>Z</u>oom</span>
<span class="t" style="position:absolute;top:294.00px;line-height:17px;font-size:13px;color:#000;font-weight:normal;white-space:nowrap;left:505.5px;transform-origin:0 50%;transform:scaleX(1.0146);">Configuração de <u>c</u>onta corrente por empresa (imp. fin. PDV)</span>
<span class="t" style="position:absolute;top:313.00px;line-height:17px;font-size:13px;color:#000;font-weight:normal;white-space:nowrap;left:505.5px;transform-origin:0 50%;transform:scaleX(1.0236);">Documentos redes <u>p</u>or empresa</span>
<span class="t" style="position:absolute;top:340.00px;line-height:17px;font-size:13px;color:#fff;font-weight:normal;white-space:nowrap;left:505.5px;transform-origin:0 50%;"><u>D</u>esativar/Ativar</span>
<span class="t" style="position:absolute;top:367.00px;line-height:17px;font-size:13px;color:#000;font-weight:normal;white-space:nowrap;left:505.5px;transform-origin:0 50%;"><u>P</u>riorizar documentos PDV</span>
<span class="t" style="position:absolute;top:394.00px;line-height:17px;font-size:13px;color:#000;font-weight:normal;white-space:nowrap;left:505.5px;transform-origin:0 50%;transform:scaleX(0.9901);">Relativo ao</span>
<span class="t" style="position:absolute;top:413.00px;line-height:17px;font-size:13px;color:#000;font-weight:normal;white-space:nowrap;left:505.5px;transform-origin:0 50%;transform:scaleX(0.9764);">Propriedades (CTRL+T)</span>
<svg style="position:absolute;left:879px;top:396px" width="6" height="9" viewBox="0 0 6 9"><path d="M0.3 0.7 L4.9 4.6 L0.3 8.5 Z" fill="#000"/></svg>
</body></html>
